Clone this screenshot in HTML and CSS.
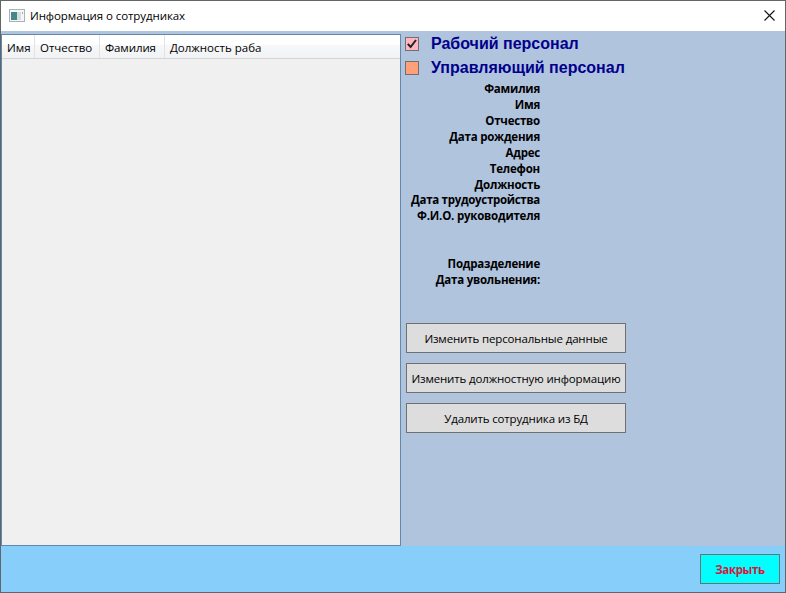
FILE: index.html
```
<!DOCTYPE html>
<html lang="ru">
<head>
<meta charset="utf-8">
<title>Информация о сотрудниках</title>
<link rel="stylesheet" href="styles.css">
</head>
<body>
<div class="window">
  <header class="titlebar">
    <svg class="app-icon" width="16" height="13" viewBox="0 0 16 13">
      <rect x=".5" y=".5" width="15" height="12" fill="#f4f6f7" stroke="#a9b2b9"/>
      <rect x="2" y="3" width="6" height="8" fill="#438b80"/>
      <rect x="2" y="3" width="2" height="8" fill="#4f7f9c"/>
      <rect x="8" y="3" width="4" height="8" fill="#d5dfe2"/>
      <rect x="13" y="3" width="1" height="2" fill="#8fb39d"/>
    </svg>
    <span class="title">Информация о сотрудниках</span>
    <svg class="close-icon" width="11" height="11" viewBox="0 0 11 11"><path d="M.5 .5l10 10M10.500 .5l-10 10" stroke="#111" stroke-width="1.1" fill="none"/></svg>
  </header>
  <main class="content">
    <section class="list">
      <div class="columns">
        <div class="col col-name">Имя</div>
        <div class="col col-patronymic">Отчество</div>
        <div class="col col-surname">Фамилия</div>
        <div class="col col-position">Должность раба</div>
      </div>
    </section>
    <section class="details">
      <div class="check"><span class="box pink"><svg width="12" height="12" viewBox="0 0 12 12"><path d="M1.800 5.800l2.800 3.200L10 2" fill="none" stroke="#212121" stroke-width="2"/></svg></span><span class="check-label">Рабочий персонал</span></div>
      <div class="check"><span class="box salmon"></span><span class="check-label">Управляющий персонал</span></div>
      <div class="fields">
        <div>Фамилия</div>
        <div>Имя</div>
        <div>Отчество</div>
        <div>Дата рождения</div>
        <div>Адрес</div>
        <div>Телефон</div>
        <div>Должность</div>
        <div class="hired">Дата трудоустройства</div>
        <div class="manager">Ф.И.О. руководителя</div>
        <div>Подразделение</div>
        <div>Дата увольнения:</div>
      </div>
      <div class="actions">
        <button>Изменить персональные данные</button>
        <button>Изменить должностную информацию</button>
        <button>Удалить сотрудника из БД</button>
      </div>
    </section>
  </main>
  <footer class="bottom"><button class="close">Закрыть</button></footer>
</div>
</body>
</html>
```
FILE: styles.css
```
* { box-sizing: border-box; }
body { margin: 0; font-family: "Open Sans", "Noto Sans", sans-serif; font-size: 11.5px; color: #000; }
.window { width: 786px; height: 593px; border: 1px solid #636669; display: flex; flex-direction: column; background: #b0c4de; }
.titlebar { height: 30px; background: #fff; display: flex; align-items: center; padding: 0 10px 0 8px; }
.app-icon { margin-bottom: 2px; }
.title { flex: 1; margin-left: 5px; line-height: 16px; letter-spacing: -.08px; }
.close-icon { margin-bottom: 2px; }
.content { height: 515px; display: flex; }
.list { width: 400px; height: 512px; margin-top: 3px; border: 1px solid #6289ad; background: #f0f0f0; }
.columns { height: 24px; display: flex; background: linear-gradient(#fff 0 40%, #f7f8fa 45%, #f1f2f4); border-bottom: 1px solid #d5d5d5; }
.col { height: 23px; padding-left: 5px; line-height: 25px; border-right: 1px solid #dfe3e8; white-space: nowrap; }
.col-name { width: 33px; }
.col-patronymic { width: 65px; }
.col-surname { width: 65px; letter-spacing: -.1px; }
.col-position { flex: 1; border-right: 0; }
.details { flex: 1; padding-left: 4px; }
.check { height: 24px; display: flex; align-items: center; }
.check:first-child { margin-top: 1px; }
.box { width: 14px; height: 14px; border: 1px solid #707070; display: block; }
.box svg { display: block; }
.pink { background: #ffb6c1; }
.salmon { background: #ffa07a; }
.check-label { margin-left: 12px; font: bold 16px/24px "Liberation Sans", sans-serif; color: #00008b; white-space: nowrap; }
.fields { width: 135px; margin-top: 1px; text-align: right; font-weight: 700; line-height: 16px; white-space: nowrap; letter-spacing: -.22px; }
.hired { margin-top: -1px; letter-spacing: -.3px; }
.manager { margin-bottom: 32px; }
.actions { margin: 35px 0 0 1px; width: 220px; display: flex; flex-direction: column; gap: 10px; }
button { height: 30px; padding: 0; border: 1px solid #707070; background: #ddd; color: #000; font: inherit; letter-spacing: -.15px; white-space: nowrap; }
.bottom { flex: 1; background: #87cefa; display: flex; justify-content: flex-end; padding: 8px 5px 0 0; }
.close { width: 80px; background: #0ff; color: #dc143c; font-weight: 700; letter-spacing: -.35px; }
```
